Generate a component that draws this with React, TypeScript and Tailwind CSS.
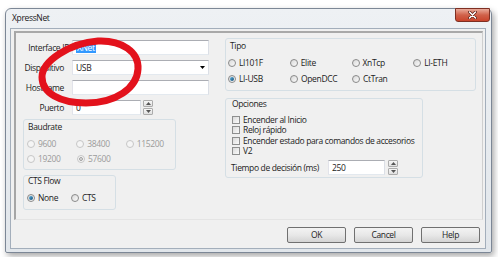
import React from "react";

function Radio({
  label,
  checked = false,
  disabled = false,
  w,
}: {
  label: string;
  checked?: boolean;
  disabled?: boolean;
  w: string;
}) {
  return (
    <div className={`flex items-center gap-[3px] h-[10px] ${w}`}>
      <span
        className={`flex items-center justify-center w-[8px] h-[8px] rounded-full border shrink-0 ${
          disabled
            ? "border-[#c6c6c6] bg-[#f5f5f5]"
            : "border-[#8a8a8a] bg-linear-to-br from-[#d9d9d9] to-[#fbfbfb]"
        }`}
      >
        {checked && (
          <span
            className={`w-[4px] h-[4px] rounded-full ${
              disabled
                ? "border border-[#a0a0a0] bg-[#e0e0e0]"
                : "bg-linear-to-br from-[#5fb6e6] to-[#0e4a72]"
            }`}
          />
        )}
      </span>
      <span className={disabled ? "text-[#9b9b9b]" : ""}>{label}</span>
    </div>
  );
}

function Check({ label }: { label: string }) {
  return (
    <div className="flex items-center gap-[3px] h-[10.33px]">
      <span className="w-[8px] h-[8px] border border-[#8e8f8f] bg-linear-to-br from-[#dadada] to-[#fbfbfb] shrink-0" />
      <span>{label}</span>
    </div>
  );
}

function Spinner() {
  return (
    <div className="flex flex-col w-[10px] h-[15px] gap-[1px]">
      <div className="flex-1 border border-[#acacac] rounded-[1px] bg-linear-to-b from-[#f7f7f7] to-[#e0e0e0] flex items-center justify-center">
        <svg width="5" height="3" viewBox="0 0 5 3">
          <path d="M0 3 L2.5 0 L5 3 Z" fill="#555" />
        </svg>
      </div>
      <div className="flex-1 border border-[#acacac] rounded-[1px] bg-linear-to-b from-[#f7f7f7] to-[#e0e0e0] flex items-center justify-center">
        <svg width="5" height="3" viewBox="0 0 5 3">
          <path d="M0 0 L2.5 3 L5 0 Z" fill="#555" />
        </svg>
      </div>
    </div>
  );
}

const inputCls =
  "h-[15px] bg-white border border-[#abadb3] border-l-[#e2e3ea] border-r-[#dbdfe6] border-b-[#e3e9ef] flex items-center pl-[3px]";

function Btn({ label }: { label: string }) {
  return (
    <div className="w-[59px] h-[16px] border border-[#707070] rounded-[2px] bg-linear-to-b from-[#f3f3f3] via-[#e8e8e8] to-[#d3d3d3] flex items-center justify-center">
      {label}
    </div>
  );
}

export default function App() {
  return (
    <div className="relative w-[498px] h-[257px] bg-white overflow-hidden pl-[5px] pt-[8px] font-['Open_Sans','Noto_Sans',sans-serif] text-[8.5px] leading-[10px] tracking-[-0.35px] text-[#1c1c1c]">
      {/* window */}
      <div className="w-[487px] h-[245px] border border-[#7c8796] rounded-t-[6px] rounded-b-[2px] bg-linear-to-b from-[#eef1f4] to-[#e1e6eb] shadow-[2px_3px_6px_rgba(0,0,0,0.35)] flex flex-col">
        {/* title bar */}
        <div className="h-[19px] flex items-start justify-between">
          <div className="pl-[6px] pt-[4px] text-[#1a1a1a]">XpressNet</div>
          <div className="mt-[-1px] mr-[1px] w-[35px] h-[14px] rounded-b-[3px] border border-[#7e2f22] bg-linear-to-b from-[#e9aa9a] via-[#d0614a] to-[#c9432a] flex items-center justify-center">
            <svg width="9" height="8" viewBox="0 0 9 8">
              <path d="M1.5 1 L7.5 7 M7.5 1 L1.5 7" stroke="#5a1a10" strokeWidth="3" strokeLinecap="round" />
              <path d="M1.5 1 L7.5 7 M7.5 1 L1.5 7" stroke="#ffffff" strokeWidth="1.6" strokeLinecap="round" />
            </svg>
          </div>
        </div>
        {/* client */}
        <div className="ml-[4px] w-[476px] h-[221px] border border-[#a3aebb] bg-[#f0f0f0] flex flex-col">
          {/* panel */}
          <div className="ml-[3px] mt-[2px] w-[469px] h-[189px] border-t-2 border-l-2 border-t-[#a9a9a9] border-l-[#a6a6a6] border-r border-b border-r-[#cfcfcf] border-b-[#e4e4e4] flex">
            {/* left column */}
            <div className="w-[209px] pt-[7px] flex flex-col">
              <div className="flex flex-col gap-[5px]">
                <div className="flex items-center h-[15px]">
                  <div className="ml-[-6px] w-[62px] pr-[2px] text-right whitespace-nowrap">Interface ID</div>
                  <div className={`${inputCls} w-[137px]`}>
                    <span className="bg-[#3399ff] text-white px-[1px]">XNet</span>
                  </div>
                </div>
                <div className="flex items-center h-[15px]">
                  <div className="w-[56px] pr-[8px] text-right whitespace-nowrap">Dispositivo</div>
                  <div className={`${inputCls} w-[137px] justify-between pr-[3px]`}>
                    <span>USB</span>
                    <svg width="5" height="3" viewBox="0 0 5 3">
                      <path d="M0 0 L5 0 L2.5 3 Z" fill="#000" />
                    </svg>
                  </div>
                </div>
                <div className="flex items-center h-[15px]">
                  <div className="w-[56px] pr-[8px] text-right whitespace-nowrap">Hostname</div>
                  <div className={`${inputCls} w-[137px]`} />
                </div>
                <div className="flex items-center h-[15px]">
                  <div className="w-[56px] pr-[8px] text-right whitespace-nowrap">Puerto</div>
                  <div className={`${inputCls} w-[69px]`}>0</div>
                  <div className="ml-[2px]">
                    <Spinner />
                  </div>
                </div>
              </div>
              {/* Baudrate */}
              <div className="mt-[4px] ml-[7px] w-[153px] h-[51px] border border-[#d5dfe5] rounded-[3px] flex flex-col">
                <div className="pt-[2px] pl-[4px]">Baudrate</div>
                <div className="mt-[7px] pl-[3px] flex flex-col gap-[5px]">
                  <div className="flex">
                    <Radio label="9600" disabled w="w-[50px]" />
                    <Radio label="38400" disabled w="w-[50px]" />
                    <Radio label="115200" disabled w="w-[50px]" />
                  </div>
                  <div className="flex">
                    <Radio label="19200" disabled w="w-[50px]" />
                    <Radio label="57600" disabled checked w="w-[50px]" />
                  </div>
                </div>
              </div>
              {/* CTS Flow */}
              <div className="mt-[5px] ml-[7px] w-[93px] h-[35px] border border-[#d5dfe5] rounded-[3px] flex flex-col">
                <div className="pl-[4px]">CTS Flow</div>
                <div className="mt-[7px] pl-[3px] flex">
                  <Radio label="None" checked w="w-[45px]" />
                  <Radio label="CTS" w="w-[45px]" />
                </div>
              </div>
            </div>
            {/* right column */}
            <div className="pt-[5px] flex flex-col">
              <div className="w-[251px] h-[53px] border border-[#d5dfe5] rounded-[3px] flex flex-col">
                <div className="pt-[2px] pl-[4px]">Tipo</div>
                <div className="mt-[7px] pl-[2px] flex flex-col gap-[6px]">
                  <div className="flex">
                    <Radio label="LI101F" w="w-[62px]" />
                    <Radio label="Elite" w="w-[62px]" />
                    <Radio label="XnTcp" w="w-[62px]" />
                    <Radio label="LI-ETH" w="w-[62px]" />
                  </div>
                  <div className="flex">
                    <Radio label="LI-USB" checked w="w-[62px]" />
                    <Radio label="OpenDCC" w="w-[62px]" />
                    <Radio label="CtTran" w="w-[62px]" />
                  </div>
                </div>
              </div>
              <div className="mt-[7px] w-[198px] h-[80px] border border-[#d5dfe5] rounded-[3px] flex flex-col">
                <div className="pl-[6px]">Opciones</div>
                <div className="mt-[6px] pl-[6px] flex flex-col">
                  <Check label="Encender al Inicio" />
                  <Check label="Reloj rápido" />
                  <Check label="Encender estado para comandos de accesorios" />
                  <Check label="V2" />
                </div>
                <div className="mt-[4px] pl-[5px] flex items-center h-[15px]">
                  <div className="w-[97px] whitespace-nowrap">Tiempo de decisión (ms)</div>
                  <div className={`${inputCls} w-[57px]`}>250</div>
                  <div className="ml-[3px]">
                    <Spinner />
                  </div>
                </div>
              </div>
            </div>
          </div>
          {/* buttons */}
          <div className="mt-[7px] pr-[5px] flex justify-end gap-[8px]">
            <Btn label="OK" />
            <Btn label="Cancel" />
            <Btn label="Help" />
          </div>
        </div>
      </div>
      {/* red annotation */}
      <svg
        className="absolute left-0 top-0 pointer-events-none"
        width="498"
        height="257"
        viewBox="0 0 498 257"
      >
        <path
          d="M42 77 C42 61, 70 43, 98 41 C122 40, 139 52, 138 69 C137 88, 116 103, 86 103 C60 103, 42 93, 42 77 Z"
          fill="none"
          stroke="#e3121c"
          strokeWidth="7"
        />
      </svg>
    </div>
  );
}
